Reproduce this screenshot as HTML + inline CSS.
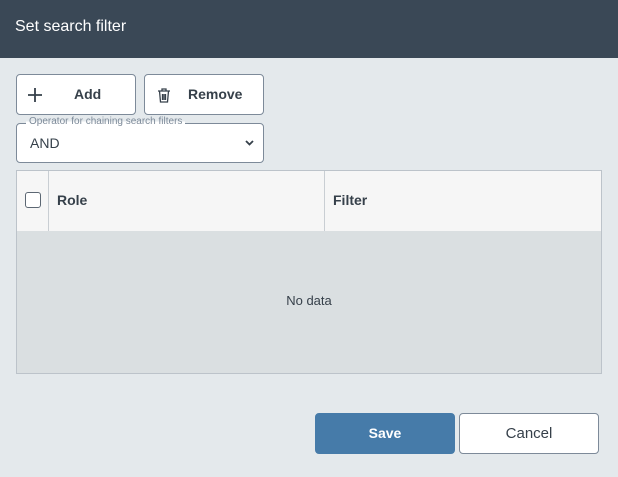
<!DOCTYPE html><html><head><style>
*{box-sizing:border-box}body{margin:0;width:618px;height:477px;background:#e4e9ec;font-family:"Liberation Sans",sans-serif;position:relative;overflow:hidden;color:#36404a}
.hdr{position:absolute;left:0;top:0;width:618px;height:58px;background:#3a4856;color:#fff;font-size:16px;line-height:54px;padding-left:15px}
.btn{position:absolute;border:1px solid #7d8a99;border-radius:4px;background:#fff;font-size:14px;font-weight:bold}
.sel{position:absolute;left:16px;top:123px;width:248px;height:40px;border:1px solid #7d8a99;border-radius:4px;background:#fff}
.tbl{position:absolute;left:16px;top:170px;width:586px;height:204px;border:1px solid #bcc3ca;background:#dadfe1}
.th{position:absolute;top:0;left:0;width:584px;height:60px;background:#f6f6f6;font-size:14px;font-weight:bold}
</style></head><body>
<div class="hdr">Set search filter</div>
<div class="btn" style="left:16px;top:74px;width:120px;height:41px"><svg style="position:absolute;left:11px;top:13px" width="14" height="14" viewBox="0 0 14 14" stroke="#36404a" stroke-width="1.8"><path d="M7 0v14M0 7h14"/></svg><span style="position:absolute;left:57px;top:11px">Add</span></div>
<div class="btn" style="left:144px;top:74px;width:120px;height:41px"><svg style="position:absolute;left:12px;top:13px" width="14" height="15" viewBox="0 0 14 15" fill="none" stroke="#36404a" stroke-width="1.3"><path d="M1 3h12M5 3V1h4v2M2.5 3l1 11h7l1-11M5.5 6v6M7 6v6M8.5 6v6"/></svg><span style="position:absolute;left:43px;top:11px">Remove</span></div>
<div class="sel"><span style="position:absolute;left:9px;top:-8px;padding:0 3px;font-size:10px;color:#7d8a99;background:linear-gradient(#e4e9ec 50%,#fff 50%)">Operator for chaining search filters</span><span style="position:absolute;left:13px;top:11px;font-size:14px">AND</span><svg style="position:absolute;right:9px;top:16px" width="9" height="6" viewBox="0 0 9 6" fill="none" stroke="#36404a" stroke-width="1.8"><path d="M1 1l3.5 3.5L8 1"/></svg></div>
<div class="tbl"><div class="th">
<div style="position:absolute;left:8px;top:21px;width:16px;height:16px;border:1.3px solid #5c6773;border-radius:3px;background:#fff"></div>
<div style="position:absolute;left:31px;top:0;width:1px;height:60px;background:#c9ced3"></div>
<span style="position:absolute;left:40px;top:21px">Role</span>
<div style="position:absolute;left:307px;top:0;width:1px;height:60px;background:#c9ced3"></div>
<span style="position:absolute;left:316px;top:21px">Filter</span></div>
<div style="position:absolute;top:122px;width:100%;text-align:center;font-size:13px">No data</div></div>
<div class="btn" style="left:315px;top:413px;width:140px;height:41px;background:#467ba9;border-color:#467ba9;color:#fff;text-align:center;line-height:39px">Save</div>
<div class="btn" style="left:459px;top:413px;width:140px;height:41px;text-align:center;line-height:39px;font-weight:normal;font-size:15px">Cancel</div>
</body></html>
